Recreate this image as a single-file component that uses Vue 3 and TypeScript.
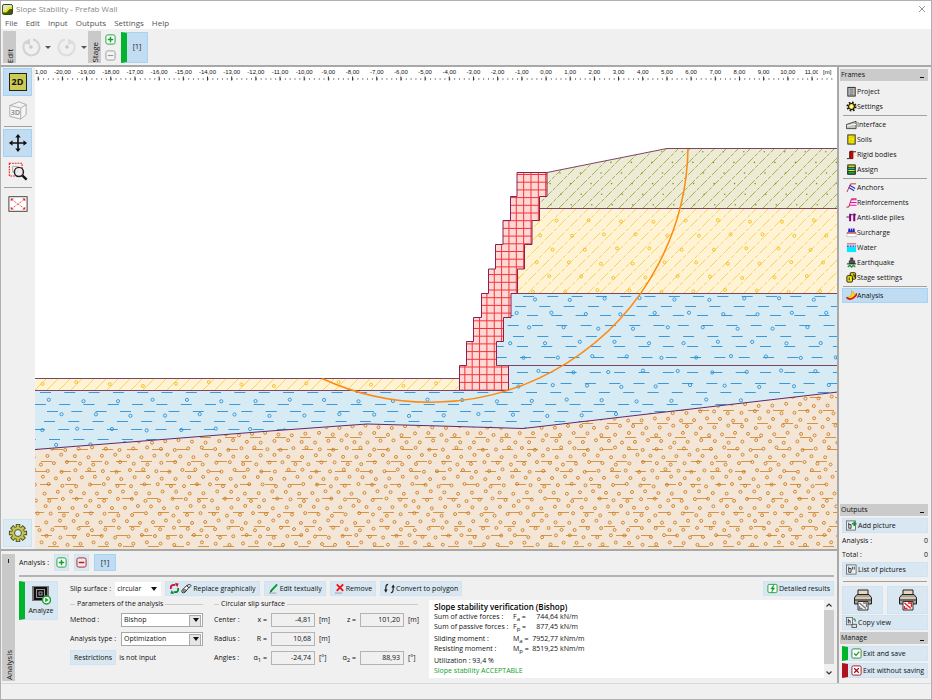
<script setup lang="ts">
import { ref } from 'vue'

type Pt = { x: number; y: number }
type Seg = { x1: number; y1: number; x2: number; y2: number }

const menu = ['File', 'Edit', 'Input', 'Outputs', 'Settings', 'Help']

const frameGroups = [
  [
    { id: 'project', label: 'Project' },
    { id: 'settings', label: 'Settings' },
  ],
  [
    { id: 'interface', label: 'Interface' },
    { id: 'soils', label: 'Soils' },
    { id: 'rigid', label: 'Rigid bodies' },
    { id: 'assign', label: 'Assign' },
  ],
  [
    { id: 'anchors', label: 'Anchors' },
    { id: 'reinf', label: 'Reinforcements' },
    { id: 'piles', label: 'Anti-slide piles' },
    { id: 'surcharge', label: 'Surcharge' },
    { id: 'water', label: 'Water' },
    { id: 'quake', label: 'Earthquake' },
    { id: 'stage', label: 'Stage settings' },
  ],
  [{ id: 'analysis', label: 'Analysis' }],
]
const active = ref('analysis')

const icons: Record<string, string> = {
  project: '<rect x="2" y="1.500" width="8" height="9.500" fill="#c4c4c4" stroke="#222"/><path d="M4 3.500h4M4 5.500h4M4 7.500h4M4 9.500h4" stroke="#555" stroke-width=".8"/>',
  settings: '<circle cx="6" cy="6" r="4.500" fill="none" stroke="#111" stroke-width="2" stroke-dasharray="1.800 1.730"/><circle cx="6" cy="6" r="3.200" fill="#ffee22" stroke="#111" stroke-width="1.200"/><circle cx="6" cy="6" r="1.200" fill="#fff"/>',
  interface: '<path d="M.5 6 L11 2.500 V10.500 H.5 Z" fill="#c4c4c4" stroke="#333" stroke-width=".9"/><path d="M1 7.500 L4 7 L7 6 L11 6" stroke="#fff" fill="none"/>',
  soils: '<rect x="2" y="1" width="8" height="10" fill="#f4e800" stroke="#222"/><path d="M4 4h1M7 3h1M5 7h1M8 8h1M4 9h1" stroke="#a89000"/>',
  rigid: '<path d="M1 10.500 H4 V3 H11" fill="none" stroke="#222"/><path d="M4.500 2.500 H7.500 V10.500 H4.500 Z" fill="#e00000" stroke="#700"/>',
  assign: '<rect x="2" y="1" width="8" height="10" fill="#f4e800" stroke="#111"/><rect x="2" y="3.500" width="8" height="2.500" fill="#00b8b8" stroke="#111" stroke-width=".7"/><rect x="2" y="8" width="8" height="3" fill="#18a050" stroke="#111" stroke-width=".7"/>',
  anchors: '<path d="M1 11 L5 2 H11" fill="none" stroke="#d22" /><path d="M4 3.500 L10 7 M3 6 L9 9.500" stroke="#2233dd" stroke-width="1.300"/>',
  reinf: '<path d="M.5 11 H3 L6 2 H11.500" fill="none" stroke="#a22"/><path d="M5.500 3h6M4.500 6h7M3.500 9h8" stroke="#f0c" stroke-width="1.300"/>',
  piles: '<path d="M.5 5.500H3.500M4 3 H11" stroke="#222"/><path d="M4.500 2v8M9 1.500v8.500" stroke="#808" stroke-width="2.200"/>',
  surcharge: '<path d="M1 6.500 H11 V10.500 H1 Z" fill="#fff" stroke="#999" stroke-width=".5"/><path d="M1 6.500H11" stroke="#a00"/><path d="M3.500 1.500v4M6 1.500v4M8.500 1.500v4" stroke="#22c" stroke-width="1.800"/><path d="M2.500 4.500h7" stroke="#22c" stroke-width="1.500"/>',
  water: '<path d="M1 2h10" stroke="#b44"/><path d="M1 4.500h10" stroke="#22c" stroke-width="1.300" stroke-dasharray="2 1"/><rect x="1" y="5.500" width="10" height="5.500" fill="#00eaff"/>',
  quake: '<path d="M5 1h2.500v3h2v3H3.500V4H5Z" fill="#555" stroke="#111" stroke-width=".6"/><path d="M1 7.500h10" stroke="#111"/><path d="M2 11l2-2 2 2 2-2 2 2" fill="none" stroke="#1a9a3a" stroke-width="1.500"/>',
  stage: '<rect x="4.500" y=".8" width="6" height="7" rx="1" fill="#e8e000" stroke="#111"/><rect x="1" y="4" width="6" height="7" rx="1" fill="#f4ee10" stroke="#111"/><path d="M3.500 6v3M7.500 3h1.500v3" stroke="#111" fill="none"/>',
  analysis: '<path d="M5 7 Q7 4 6 1 Q11 4 8.500 8 Q5 11 1 8.500Z" fill="#ffe000" stroke="#d80" stroke-width=".6"/><path d="M.5 8 Q4 11.500 8 8.500 T11.500 3.500" fill="none" stroke="#d11" stroke-width="1.800"/>',
  picAdd: '<rect x=".5" y="1" width="10" height="10" fill="#e8eef2" stroke="#555" stroke-width=".8"/><path d="M3 3v6M3 5h2.500v4H3" fill="none" stroke="#222" stroke-width=".9"/><path d="M6.500 4h5M9 1.500v5" stroke="#0a9a2a" stroke-width="1.700"/>',
  picList: '<rect x=".5" y="1" width="10.500" height="10" fill="#e8eef2" stroke="#555" stroke-width=".8"/><path d="M3 3v6M3 5h2.500v4H3M7 3v3M9 3v3" fill="none" stroke="#222" stroke-width=".9"/>',
  picCopy: '<rect x=".5" y=".5" width="6.500" height="8" fill="#e8eef2" stroke="#555" stroke-width=".8"/><path d="M2.500 2v5M2.500 4h2v3" fill="none" stroke="#222" stroke-width=".9"/><path d="M8 2q2.500 0 2 3" stroke="#0a9a2a" fill="none" stroke-width="1.200"/><path d="M6.500 8h5v3.500h-5z" fill="#ddd" stroke="#333" stroke-width=".8"/>',
  plus: '<rect x="1" y="1" width="10" height="10" rx="2" fill="#fff" stroke="#11a02c"/><path d="M6 3v6M3 6h6" stroke="#11a02c" stroke-width="1.600"/>',
  minus: '<rect x="1" y="1" width="10" height="10" rx="2" fill="#f4e8e8" stroke="#a81c28"/><path d="M3 6h6" stroke="#a81c28" stroke-width="1.600"/>',
  minusOff: '<rect x="1" y="1" width="10" height="10" rx="2" fill="#f4f4f4" stroke="#999"/><path d="M3 6h6" stroke="#999" stroke-width="1.200"/>',
  cycle: '<path d="M2 6.500 V5 Q2 2 5.500 2H7" fill="none" stroke="#c8102e" stroke-width="1.900"/><path d="M6.500 0L10.500 .5 9 4.500z" fill="#c8102e"/><path d="M10 5.500V7q0 3-3.500 3H5" fill="none" stroke="#0b8a2b" stroke-width="1.900"/><path d="M5.500 12L1.500 11.500 3 7.500z" fill="#0b8a2b"/>',
  hand: '<path d="M1 8l5-5 2.500 2-4 5q-2 1.500-3.500 0zM6 3l3-1.500 2.500 1.500M8 5l2.500-1" fill="#fff" stroke="#222" stroke-width="1"/><circle cx="3.800" cy="8.200" r="1.500" fill="#999" stroke="#222" stroke-width=".6"/>',
  pencil: '<path d="M3 9 L10 1.500" stroke="#0c9a2c" stroke-width="2"/><path d="M1 11h8" stroke="#888" stroke-width=".8"/><path d="M2 10.500l1-2 1 1z" fill="#222"/>',
  cross: '<path d="M3 1.500l7 7M10 1.500l-7 7" stroke="#ee1111" stroke-width="2"/><path d="M1 11h8" stroke="#888" stroke-width=".8"/>',
  convert: '<path d="M4.500 1.500Q2 1.500 2 5v3M7.500 10.500q2.500 0 2.500-4V4" fill="none" stroke="#222" stroke-width="1.300"/><path d="M0 7h4L2 10.500zM8 5h4L10 1.500z" fill="#222"/>',
  bolt: '<rect x="1" y="1.500" width="10" height="9" rx="1.500" fill="#fff" stroke="#11a02c"/><path d="M7.500 2L4 6.500h2L5 10l3.500-4.500h-2z" fill="#11a02c" stroke="#11a02c" stroke-width=".5"/>',
  check: '<rect x="1" y="1" width="10" height="10" rx="1.500" fill="#fff" stroke="#1f8a34"/><path d="M3.500 6l2 2 3.500-4" fill="none" stroke="#1f8a34" stroke-width="1.300"/>',
  close: '<rect x="1" y="1" width="10" height="10" rx="1.500" fill="#fff" stroke="#9a1220"/><path d="M3.500 3.500l5 5M8.500 3.500l-5 5" stroke="#9a1220" stroke-width="1.300"/>',
}

/* horizontal scale */
const SCALE = 24.18
const ORIGIN = 546
const labels = Array.from({ length: 33 }, (_, i) => i - 21).map((m) => ({
  x: ORIGIN + m * SCALE,
  text: `${m},00`,
}))
const minorTicks = Array.from({ length: 170 }, (_, i) => ORIGIN + (i - 107) * (SCALE / 5)).filter((x) => x < 836)

/* regular lattice of soil grains */
function lattice(ox: number, oy: number, ax: number, bx: number, by: number, y0: number, y1: number, jitter = 0): Pt[] {
  const out: Pt[] = []
  for (let j = Math.ceil((y0 - oy) / by); oy + j * by <= y1; j++) {
    const shift = (ox + j * bx - 35) % ax
    for (let x = 35 + shift - ax, i = 0; x < 842; x += ax, i++) {
      const k = Math.sin(i * 12.9 + j * 78.2) * jitter
      const l = Math.cos(i * 39.3 + j * 11.1) * jitter
      out.push({ x: x + k, y: oy + j * by + l })
    }
  }
  return out
}

function dashes(rows: number[][], pitch: number, len: number): Seg[] {
  const out: Seg[] = []
  for (const [y, x0] of rows) {
    for (let x = 35 + ((x0 - 35) % pitch) - pitch; x < 840; x += pitch) out.push({ x1: x, y1: y, x2: x + len, y2: y })
  }
  return out
}

function diagonals(x0: number, x1: number, top: number, bottom: number, pitch: number): Seg[] {
  const out: Seg[] = []
  const h = bottom - top
  for (let x = x0 - h; x < x1; x += pitch) out.push({ x1: x, y1: bottom, x2: x + h, y2: top })
  return out
}

const oliveLines = diagonals(535, 850, 148, 209, 12)
const oliveDots = lattice(560, 173, 20.5, 10.6, 10.6, 148, 209)
const sandLines = diagonals(505, 850, 208, 294, 12)
const sandDots = lattice(557, 221, 32, 14.3, 14, 210, 292, 1)
const stripLines = diagonals(35, 470, 378, 391, 12)
const stripDots = lattice(42, 384, 33, 14, 14, 380, 390, 2)
const clayRows = dashes(
  [
    [296.5, 523], [306.5, 515], [315.5, 527], [325.5, 532], [336.5, 513], [346.5, 517], [357.5, 520],
    [372.5, 517], [383.5, 512], [392.5, 526], [404.5, 448], [411.5, 533], [421.5, 530], [429.5, 520], [439.5, 535],
  ],
  24.3,
  11,
)
const clayDots = lattice(536, 299, 34.6, 14.3, 14.5, 292, 450, 1)
const rockRows = dashes(
  [
    [397.5, 60], [410.5, 48], [423.5, 57], [437.5, 50], [449.5, 52], [461.5, 41], [471.5, 60], [484.5, 40],
    [498.5, 47], [512.5, 58], [526.5, 54], [535.5, 66], [546.5, 48],
  ],
  25,
  11,
)
const rockDots = lattice(47, 456, 13.4, 7.3, 7.3, 395, 549, 1.3)

const wallOutline =
  'M517 172.500H547V196.500H539.500V220.500H532V244.500H524.500V269H517.500V293.500H511V317.500H503.500V341.500H496.500V365.500H508.500V390.500H459.500V365.500H466.500V341.500H473.500V317.500H481.500V293.500H488.500V269H495.500V244.500H503V220.500H510.500V196.500H517Z'
const wallV = Array.from({ length: 13 }, (_, i) => 457.5 + i * 7.35)
const wallH = Array.from({ length: 29 }, (_, i) => 174.5 + i * 7.7)

const method = ref('Bishop')
const analysisType = ref('Optimization')
const slip = ref('circular')
</script>

<template>
  <div class="app">
    <header class="title">
      <svg class="logo" viewBox="0 0 12 12"><rect x=".5" y=".5" width="11" height="11" rx="2" fill="#3d5c12" stroke="#26400a"/><path d="M1 8h3l4-4h3V2.500Q11 1 9.500 1H2.500Q1 1 1 2.500z" fill="#dfe8b8"/><path d="M1 8.500H4.500L8 4.500H11" fill="none" stroke="#f4e400" stroke-width="1.800"/></svg>
      <span class="name">Slope Stability - Prefab Wall</span>
      <button class="x" aria-label="Close"><svg viewBox="0 0 8 8"><path d="M1 1l6 6M7 1l-6 6" stroke="#888" stroke-width=".9"/></svg></button>
    </header>
    <nav class="menu">
      <a v-for="m in menu" :key="m" href="#">{{ m }}</a>
    </nav>

    <div class="toolbar">
      <div class="vtab"><span>Edit</span></div>
      <button class="hist" aria-label="Undo">
        <svg viewBox="0 0 20 20"><path d="M5 4.500A8 8 0 1 0 12 2.500" fill="none" stroke="#d2d2d2" stroke-width="2"/><path d="M2 5.500L9 1.500V8z" fill="#d2d2d2"/><circle cx="10" cy="10" r="1.800" fill="#c8c8c8"/></svg>
      </button>
      <i class="caret"></i>
      <button class="hist" aria-label="Redo">
        <svg viewBox="0 0 20 20"><path d="M15 4.500A8 8 0 1 1 8 2.500" fill="none" stroke="#dcdcdc" stroke-width="2"/><path d="M18 5.500L11 1.500V8z" fill="#dcdcdc"/><circle cx="10" cy="10" r="1.800" fill="#c8c8c8"/></svg>
      </button>
      <i class="caret"></i>
      <div class="vtab"><span>Stage</span></div>
      <div class="stagebtns">
        <button aria-label="Add stage"><svg viewBox="0 0 12 12" v-html="icons.plus" /></button>
        <button aria-label="Remove stage"><svg viewBox="0 0 12 12" v-html="icons.minusOff" /></button>
      </div>
      <button class="stage1">[1]</button>
    </div>

    <div class="body">
      <div class="left">
        <div class="work">
          <aside class="tools">
            <button class="on" aria-label="2D view"><span class="two">2D</span></button>
            <button aria-label="3D view">
              <svg viewBox="0 0 22 22"><path d="M2 6L12 2l8 3v11l-6 5L2 18zM2 6l12 3 6-4M14 9v12" fill="#f6f6f6" stroke="#a8a8a8"/><text x="3" y="16" class="d3">3D</text></svg>
            </button>
            <hr />
            <button class="on" aria-label="Pan">
              <svg viewBox="0 0 22 22"><path d="M11 3v16M3 11h16" stroke="#111" stroke-width="1.800"/><path d="M11 1l3 4H8zM11 21l3-4H8zM1 11l4-3v6zM21 11l-4-3v6z" fill="#111"/></svg>
            </button>
            <button aria-label="Zoom region">
              <svg viewBox="0 0 22 22"><path d="M1.500 2.500h14v14h-14z" fill="none" stroke="#e22" stroke-width="1.300" stroke-dasharray="2 1"/><path d="M5 6h6v6H5z" fill="none" stroke="#aaa"/><circle cx="12" cy="12" r="5" fill="#eee" fill-opacity=".8" stroke="#222" stroke-width="1.600"/><path d="M16 16l4.500 4.500" stroke="#111" stroke-width="2.600"/></svg>
            </button>
            <hr />
            <button aria-label="Fit view">
              <svg viewBox="0 0 22 22"><rect x="1" y="3" width="20" height="16" fill="#fff" stroke="#333"/><path d="M4 6l14 10M18 6L4 16" stroke="#f05050" stroke-dasharray="2.500 1.500"/><path d="M3 8V5h3.500zM19 8V5h-3.500zM3 14v3h3.500zM19 14v3h-3.500z" fill="#e22"/></svg>
            </button>
            <button class="gear" aria-label="Display settings">
              <svg viewBox="0 0 22 22"><g stroke="#4a4a18" stroke-width="5"><path d="M11 1v20M1 11h20M4 4l14 14M18 4L4 18"/></g><g stroke="#c3c352" stroke-width="3"><path d="M11 2v18M2 11h18M4.700 4.700l12.600 12.600M17.300 4.700L4.700 17.300"/></g><circle cx="11" cy="11" r="6.600" fill="#c3c352"/><circle cx="11" cy="11" r="3.800" fill="#dceaf4" stroke="#4a4a18"/></svg>
            </button>
          </aside>

          <svg class="canvas" viewBox="35 67 803 482" preserveAspectRatio="xMinYMin slice">
            <defs>
              <clipPath id="cOlive"><path d="M547 172.500L667 148.500H838V208.500H540V196.500H547Z" /></clipPath>
              <clipPath id="cSand"><path d="M539 208.500H838V293.500H511V269H524V244H532V220H539Z" /></clipPath>
              <clipPath id="cStrip"><path d="M35 378.500H459V390.500H35Z" /></clipPath>
              <clipPath id="cClay"><path d="M511 293.500H838V392L523 428.500L440 426L367 424L270 431L35 449.500V390.500H508V365.500H496V341.500H503V317H511Z" /></clipPath>
              <clipPath id="cRock"><path d="M35 449.500L270 431L367 424L440 426L523 428.500L838 392V549H35Z" /></clipPath>
              <clipPath id="cWall"><path :d="wallOutline" /></clipPath>
            </defs>
            <rect x="35" y="67" width="803" height="482" fill="#fff" />

            <g class="ruler">
              <template v-for="l in labels" :key="l.text">
                <text :x="l.x" y="74" text-anchor="middle">{{ l.text }}</text>
                <path :d="`M${l.x} 76.500v4`" stroke="#333" />
              </template>
              <rect v-for="x in minorTicks" :key="x" :x="x" y="78.500" width="1" height="1" fill="#222" />
              <rect x="818" y="67" width="20" height="9" fill="#fff" />
              <text x="823" y="74">[m]</text>
            </g>

            <g clip-path="url(#cOlive)">
              <rect x="530" y="145" width="310" height="70" fill="#ecebd6" />
              <g stroke="#a3a83a" stroke-width=".9" stroke-dasharray="9 1.500 4 1.500">
                <line v-for="(s, i) in oliveLines" :key="i" v-bind="s" />
              </g>
              <circle v-for="(p, i) in oliveDots" :key="i" :cx="p.x" :cy="p.y" r=".8" fill="#8c9420" />
            </g>
            <g clip-path="url(#cSand)">
              <rect x="500" y="205" width="340" height="92" fill="#fff3d6" />
              <g stroke="#f9cf48" stroke-width=".9" stroke-dasharray="11 2 4 2">
                <line v-for="(s, i) in sandLines" :key="i" v-bind="s" />
              </g>
              <circle v-for="(p, i) in sandDots" :key="i" :cx="p.x" :cy="p.y" r="1.500" fill="none" stroke="#f3bd12" stroke-width=".9" />
            </g>
            <g clip-path="url(#cStrip)">
              <rect x="35" y="376" width="430" height="16" fill="#fff3d6" />
              <g stroke="#f9cf48" stroke-width=".9">
                <line v-for="(s, i) in stripLines" :key="i" v-bind="s" />
              </g>
              <circle v-for="(p, i) in stripDots" :key="i" :cx="p.x" :cy="p.y" r="1.500" fill="none" stroke="#f3bd12" stroke-width=".9" />
            </g>
            <g clip-path="url(#cClay)">
              <rect x="35" y="290" width="805" height="162" fill="#d7ebf4" />
              <g stroke="#3c98d8">
                <line v-for="(s, i) in clayRows" :key="i" v-bind="s" />
              </g>
              <circle v-for="(p, i) in clayDots" :key="i" :cx="p.x" :cy="p.y" r="1.600" fill="none" stroke="#2c92d6" stroke-width=".9" />
            </g>
            <g clip-path="url(#cRock)">
              <rect x="35" y="390" width="805" height="160" fill="#f4e6d7" />
              <g stroke="#d69442">
                <line v-for="(s, i) in rockRows" :key="i" v-bind="s" />
              </g>
              <circle v-for="(p, i) in rockDots" :key="i" :cx="p.x" :cy="p.y" r="1.500" fill="none" stroke="#cc7d22" stroke-width=".9" />
            </g>

            <g clip-path="url(#cWall)">
              <rect x="455" y="170" width="95" height="222" fill="#ffd9d6" />
              <g stroke="#f5333a">
                <path v-for="x in wallV" :key="x" :d="`M${x} 172V391`" />
                <path v-for="y in wallH" :key="y" :d="`M459 ${y}H548`" />
              </g>
            </g>
            <g fill="none" stroke="#7d4468">
              <path :d="wallOutline" stroke="#8c2050" />
              <path d="M547 172.500L667 148.500H838M540 208.500H838M517 293.500H838M497 365.500H838M35 378.500H459M35 390.500H508" />
              <path d="M35 449.500L270 431L367 424L440 426L523 428.500L838 392" stroke="#5c2a6c" />
            </g>
            <path d="M322 378.500A258 258 0 0 0 688 149" fill="none" stroke="#ff8a10" stroke-width="1.500" />
          </svg>
        </div>

        <section class="panel">
          <div class="vtab tall"><b></b><span>Analysis</span></div>
          <div class="content">
            <div class="runs">
              <span>Analysis :</span>
              <button class="btn sq" aria-label="Add analysis"><svg viewBox="0 0 12 12" v-html="icons.plus" /></button>
              <button class="btn sq" aria-label="Remove analysis"><svg viewBox="0 0 12 12" v-html="icons.minus" /></button>
              <button class="btn run on">[1]</button>
            </div>
            <div class="cols">
              <button class="btn analyze">
                <svg viewBox="0 0 20 20"><rect x="1" y="1" width="17" height="15" fill="#777"/><rect x="3" y="2" width="13" height="13" fill="#111"/><rect x="5.500" y="4.500" width="8" height="8" fill="none" stroke="#999"/><rect x="8" y="7" width="3" height="3" fill="#111" stroke="#bbb" stroke-width=".8"/><circle cx="15.500" cy="15" r="4" fill="#fff" stroke="#12a02c" stroke-width="1.500"/><path d="M14.200 12.800l3.500 2.200-3.500 2.200z" fill="#12a02c"/></svg>
                Analyze
              </button>
              <div class="main">
                <div class="bar">
                  <label for="slip">Slip surface :</label>
                  <div class="pick flat">
                    <select id="slip" v-model="slip"><option>circular</option><option>polygonal</option></select>
                  </div>
                  <button class="btn"><svg viewBox="0 0 12 12" v-html="icons.cycle" /><svg viewBox="0 0 12 12" v-html="icons.hand" />Replace graphically</button>
                  <button class="btn"><svg viewBox="0 0 12 12" v-html="icons.pencil" />Edit textually</button>
                  <button class="btn"><svg viewBox="0 0 12 12" v-html="icons.cross" />Remove</button>
                  <button class="btn"><svg viewBox="0 0 12 12" v-html="icons.convert" />Convert to polygon</button>
                  <button class="btn end"><svg viewBox="0 0 12 12" v-html="icons.bolt" />Detailed results</button>
                </div>
                <div class="forms">
                  <fieldset class="params">
                    <legend>Parameters of the analysis</legend>
                    <label for="method">Method :</label>
                    <div class="pick"><select id="method" v-model="method"><option>Bishop</option><option>Spencer</option></select></div>
                    <label for="atype">Analysis type :</label>
                    <div class="pick"><select id="atype" v-model="analysisType"><option>Optimization</option><option>Standard</option></select></div>
                    <div class="restr"><button class="btn">Restrictions</button><span>is not input</span></div>
                  </fieldset>
                  <fieldset class="circle">
                    <legend>Circular slip surface</legend>
                    <span>Center :</span><label for="fx">x =</label><input id="fx" value="-4,81" /><span>[m]</span><label for="fz">z =</label><input id="fz" value="101,20" /><span>[m]</span>
                    <span>Radius :</span><label for="fr">R =</label><input id="fr" value="10,68" /><span class="span">[m]</span>
                    <span>Angles :</span><label for="fa">α<sub>1</sub> =</label><input id="fa" value="-24,74" /><span>[°]</span><label for="fb">α<sub>2</sub> =</label><input id="fb" value="88,93" /><span>[°]</span>
                  </fieldset>
                  <div class="results">
                    <div class="text">
                      <h2>Slope stability verification (Bishop)</h2>
                      <dl>
                        <dt>Sum of active forces :</dt><dd>F<sub>a</sub> =</dd><dd class="n">744,64</dd><dd>kN/m</dd>
                        <dt>Sum of passive forces :</dt><dd>F<sub>p</sub> =</dd><dd class="n">877,45</dd><dd>kN/m</dd>
                      </dl>
                      <dl>
                        <dt>Sliding moment :</dt><dd>M<sub>a</sub> =</dd><dd class="n">7952,77</dd><dd>kNm/m</dd>
                        <dt>Resisting moment :</dt><dd>M<sub>p</sub> =</dd><dd class="n">8519,25</dd><dd>kNm/m</dd>
                      </dl>
                      <p>Utilization : 93,4 %</p>
                      <p class="ok">Slope stability ACCEPTABLE</p>
                    </div>
                    <div class="scroll">
                      <svg viewBox="0 0 10 10"><path d="M2.500 6.500L5 4l2.500 2.500" fill="none" stroke="#333" stroke-width="1.200"/></svg>
                      <i></i>
                      <svg viewBox="0 0 10 10"><path d="M2.500 3.500L5 6l2.500-2.500" fill="none" stroke="#333" stroke-width="1.200"/></svg>
                    </div>
                  </div>
                </div>
              </div>
            </div>
          </div>
        </section>
      </div>

      <aside class="right">
        <h3>Frames<i></i></h3>
        <div class="frames">
          <template v-for="(g, gi) in frameGroups" :key="gi">
            <hr v-if="gi" />
            <button v-for="f in g" :key="f.id" class="frame" :class="{ on: active === f.id }" @click="active = f.id">
              <svg viewBox="0 0 12 12" v-html="icons[f.id]" />{{ f.label }}
            </button>
          </template>
        </div>
        <h3 class="push">Outputs<i></i></h3>
        <div class="outs">
          <button class="btn wide"><svg viewBox="0 0 12 12" v-html="icons.picAdd" />Add picture</button>
          <div class="count"><span>Analysis :</span><span>0</span></div>
          <div class="count"><span>Total :</span><span>0</span></div>
          <button class="btn wide"><svg viewBox="0 0 12 12" v-html="icons.picList" />List of pictures</button>
          <hr />
          <div class="printers">
            <button v-for="c in ['#777', '#e5202c']" :key="c" class="btn" :aria-label="c === '#777' ? 'Print' : 'Export'">
              <svg viewBox="0 0 20 22"><path d="M5 1h10v6H5z" fill="#e6d5bb" stroke="#222"/><path d="M4 5.500h12l2.500 3V15h-17V8.500z" fill="#a8a29a" stroke="#222"/><path d="M2.500 9h15" stroke="#e8d4b4" stroke-width="1.500"/><path d="M2 11h16" stroke="#333"/><path d="M5 12.500h10V21H5z" fill="#f6f6f6" stroke="#333"/><path d="M6.500 14l6.500 5.500M10 14h3.500v4M6.500 17v2.500h3" :stroke="c" fill="none" stroke-width="1.300"/></svg>
            </button>
          </div>
          <button class="btn wide"><svg viewBox="0 0 12 12" v-html="icons.picCopy" />Copy view</button>
        </div>
        <h3>Manage<i></i></h3>
        <div class="exits">
          <button class="btn wide save"><svg viewBox="0 0 12 12" v-html="icons.check" />Exit and save</button>
          <button class="btn wide drop"><svg viewBox="0 0 12 12" v-html="icons.close" />Exit without saving</button>
        </div>
      </aside>
    </div>
    <footer></footer>
  </div>
</template>

<style>
body {
  margin: 0;
}
</style>

<style scoped>
* {
  box-sizing: border-box;
}
.app {
  min-height: 100vh;
  display: flex;
  flex-direction: column;
  background: #f0f0f0;
  color: #111;
  font: 7px/10px 'Open Sans', 'Noto Sans', sans-serif;
  border: 1px solid #b0b0b0;
}
button,
input,
select {
  font: inherit;
  color: inherit;
  margin: 0;
  padding: 0;
  border: 0;
  background: none;
  border-radius: 0;
}
svg {
  display: block;
  flex: none;
}
hr {
  margin: 0;
  border: 0;
  border-top: 1px solid #a0a0a0;
}
.title {
  display: flex;
  align-items: center;
  gap: 3px;
  height: 16px;
  padding: 0 5px 0 1px;
  background: #fff;
  font-size: 8px;
  color: #888;
}
.logo {
  width: 11px;
  height: 11px;
}
.x {
  margin-left: auto;
}
.x svg {
  width: 8px;
  height: 8px;
}
.menu {
  display: flex;
  align-items: center;
  gap: 8px;
  height: 12px;
  padding: 0 4px;
  background: #fff;
  font-size: 8px;
  line-height: 12px;
}
.menu a {
  color: #555;
  text-decoration: none;
}
.toolbar {
  display: flex;
  align-items: center;
  height: 38px;
  padding: 0 2px;
  border-bottom: 2px solid #a8a8a8;
}
.vtab {
  display: flex;
  align-items: flex-end;
  justify-content: center;
  width: 13px;
  height: 32px;
  background: #c9c9c9;
  font-size: 8px;
}
.vtab span {
  writing-mode: vertical-rl;
  transform: rotate(180deg);
  line-height: 12px;
}
.hist {
  margin-left: 5px;
}
.hist svg {
  width: 20px;
  height: 20px;
}
.caret {
  width: 0;
  margin: 0 1px 0 4px;
  border: 3px solid transparent;
  border-top-color: #555;
  border-bottom: 0;
}
.stagebtns {
  display: grid;
  gap: 5px;
  margin: 0 5px 0 4px;
}
.stagebtns svg {
  width: 11px;
  height: 11px;
}
.stage1 {
  width: 27px;
  height: 31px;
  border: 1px solid #a8d4f4;
  border-left: 6px solid #00b42c;
  background: #c2dcf2;
}
.body {
  flex: 1;
  display: flex;
}
.left {
  flex: 1;
  min-width: 0;
  display: flex;
  flex-direction: column;
  border-right: 2px solid #a8a8a8;
}
.work {
  flex: 1;
  display: flex;
  min-height: 300px;
  border-bottom: 2px solid #a8a8a8;
}
.tools {
  width: 34px;
  flex: none;
  display: flex;
  flex-direction: column;
  padding: 1px 2px 2px;
}
.tools button {
  width: 29px;
  height: 28px;
  display: grid;
  place-items: center;
  border: 1px solid transparent;
}
.tools button.on {
  background: #c2dcf2;
  border-color: #a4d2f4;
}
.tools svg {
  width: 20px;
  height: 20px;
}
.tools hr {
  margin: 2px 1px;
}
.two {
  width: 18px;
  height: 18px;
  border: 1px solid #222;
  background: #cbcb55;
  font: bold 9px/16px 'Open Sans', sans-serif;
}
.d3 {
  font: bold 8px 'Open Sans', sans-serif;
  fill: #999;
}
.tools .gear {
  margin-top: auto;
  background: #dceaf4;
  border-color: #cfe2f0;
}
.canvas {
  flex: 1;
  width: 0;
  min-width: 0;
  height: auto;
}
.ruler text {
  font: 6px 'Liberation Sans', sans-serif;
  fill: #111;
}
.panel {
  display: flex;
  padding: 3px 3px 2px 1px;
}
.vtab.tall {
  height: auto;
  flex-direction: column;
  align-items: center;
  justify-content: space-between;
  padding: 5px 0 1px;
}
.vtab b {
  width: 1px;
  height: 4px;
  background: #222;
}
.content {
  flex: 1;
  min-width: 0;
  padding: 0 0 3px 4px;
}
.btn {
  display: flex;
  align-items: center;
  justify-content: center;
  gap: 1px;
  height: 15px;
  padding: 0 3px;
  border: 1px solid #cfe3f2;
  background: #d8e7f2;
  white-space: nowrap;
}
.btn svg {
  width: 11px;
  height: 11px;
}
.btn.on,
.frame.on {
  background: #c0dcf2;
  border-color: #a8d4f4;
}
.runs {
  display: flex;
  align-items: center;
  gap: 5px;
  height: 23px;
  padding-bottom: 4px;
  border-bottom: 2px solid #b4b4b4;
}
.runs .btn {
  height: 17px;
}
.sq {
  width: 15px;
  padding: 0;
}
.run {
  width: 22px;
}
.cols {
  display: flex;
  align-items: flex-start;
  gap: 12px;
  padding-top: 4px;
}
.analyze {
  flex-direction: column;
  width: 39px;
  height: 39px;
  padding: 0;
  border-left: 6px solid #00b42c;
}
.analyze svg {
  width: 20px;
  height: 20px;
}
.main {
  flex: 1;
  min-width: 0;
}
.bar {
  display: flex;
  align-items: center;
  gap: 4px;
}
.bar .end {
  margin-left: auto;
}
.pick {
  position: relative;
}
.pick select {
  display: block;
  appearance: none;
  width: 100%;
  height: 14px;
  padding: 0 2px;
  border: 1px solid #a8a8a8;
  background: #fff;
}
.pick::after {
  content: '';
  position: absolute;
  right: 4px;
  top: 5px;
  border: 3px solid transparent;
  border-top: 4px solid #111;
  border-bottom: 0;
  pointer-events: none;
}
.pick:not(.flat)::before {
  content: '';
  position: absolute;
  right: 2px;
  top: 2px;
  width: 10px;
  height: 10px;
  border: 1px solid #aaa;
  background: #e6e6e6;
  pointer-events: none;
}
.pick.flat {
  width: 46px;
}
.pick.flat select {
  border-color: #fff;
  padding: 0 1px;
}
.forms {
  display: flex;
  gap: 11px;
  padding-top: 4px;
}
fieldset {
  display: grid;
  align-items: center;
  align-content: start;
  gap: 4px 0;
  margin: 0;
  padding: 4px 0 0;
  border: 0;
  border-top: 1px solid #ccc;
  grid-auto-rows: 15px;
}
legend {
  margin-left: 5px;
  padding: 0 2px;
  line-height: 8px;
}
.params {
  width: 133px;
  grid-template-columns: 51px 1fr;
}
.restr {
  grid-column: 1 / 3;
  display: flex;
  align-items: center;
  gap: 3px;
}
.circle {
  width: 204px;
  grid-template-columns: 37px 20px 44px 21px 24px 44px 14px;
}
.circle label {
  white-space: nowrap;
  text-align: right;
  padding-right: 4px;
}
.circle input {
  width: 44px;
  height: 14px;
  padding: 0 3px;
  border: 1px solid #b4b4b4;
  background: #f0f0f0;
  text-align: right;
}
.circle input + span {
  padding-left: 4px;
}
.circle .span {
  grid-column: 4 / 8;
}
sub {
  font-size: 6px;
  line-height: 0;
  vertical-align: -2px;
}
.results {
  flex: 1;
  min-width: 0;
  display: flex;
}
.text {
  flex: 1;
  height: 78px;
  padding: 2px 5px;
  background: #fff;
}
h2 {
  margin: 0;
  font-size: 8px;
  font-weight: 600;
  line-height: 10px;
  color: #000;
}
dl {
  display: grid;
  grid-template-columns: 79px 18px 29px 1fr;
  margin: 0 0 2px;
}
dd {
  margin: 0;
  white-space: nowrap;
}
.n {
  text-align: right;
  margin-right: 2px;
}
p {
  margin: 0;
}
.ok {
  color: #12a02c;
}
.scroll {
  width: 10px;
  display: flex;
  flex-direction: column;
}
.scroll i {
  flex: 1;
  background: #cdcdcd;
  margin-bottom: 4px;
}
.scroll svg {
  width: 10px;
  height: 10px;
}
.right {
  width: 92px;
  flex: none;
  display: flex;
  flex-direction: column;
  padding: 2px 3px 0 1px;
}
h3 {
  display: flex;
  justify-content: space-between;
  align-items: center;
  height: 12px;
  margin: 0;
  padding: 0 4px 0 1px;
  background: #cbcbcb;
  font-size: 7px;
  font-weight: normal;
}
h3 i {
  width: 4px;
  height: 1px;
  margin-top: 5px;
  background: #111;
}
.push {
  margin-top: auto;
}
.frames {
  padding: 3px 0 0 2px;
}
.frames hr {
  margin: 1px;
}
.frame {
  display: flex;
  align-items: center;
  gap: 0;
  width: 100%;
  height: 15px;
  padding-left: 3px;
  border: 1px solid transparent;
}
.frame svg {
  width: 11px;
  height: 11px;
}
.outs,
.exits {
  display: flex;
  flex-direction: column;
  gap: 1px;
  padding: 2px 0 2px 2px;
}
.wide {
  justify-content: flex-start;
  padding-left: 3px;
}
.count {
  display: flex;
  justify-content: space-between;
  line-height: 13px;
}
.outs hr {
  margin: 3px 1px;
}
.printers {
  display: grid;
  grid-template-columns: 1fr 1fr;
  gap: 4px;
}
.printers .btn {
  height: 28px;
}
.printers svg {
  width: 20px;
  height: 22px;
}
.exits {
  gap: 2px;
  padding-bottom: 5px;
}
.save {
  border-left: 6px solid #00b42c;
}
.drop {
  border-left: 6px solid #b01020;
}
footer {
  height: 16px;
  border-top: 1px solid #d8d8d8;
}
</style>
